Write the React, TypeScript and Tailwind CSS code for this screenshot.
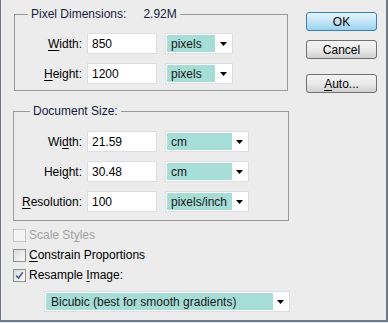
import React from "react";

const Arrow = () => (
  <svg width="7" height="4" viewBox="0 0 7 4" className="block">
    <polygon points="0,0 7,0 3.5,4" fill="#000" />
  </svg>
);

function Select({ label, w, teal }: { label: string; w: string; teal: string }) {
  return (
    <div className={`${w} h-[21px] bg-white border border-[#dadfe4] flex items-center p-[1px]`}>
      <div className={`${teal} h-full bg-[#a6ddd6] flex items-center pl-[4px] text-[#1a1a1a]`}>{label}</div>
      <div className="flex-1 flex justify-center items-center">
        <Arrow />
      </div>
    </div>
  );
}

function Row({ label, value, unit, selW, tealW }: { label: React.ReactNode; value: string; unit: string; selW: string; tealW: string }) {
  return (
    <div className="flex items-center h-[21px]">
      <div className="w-[67px] text-right">{label}</div>
      <div className="ml-[5px] w-[70px] h-[21px] bg-white border border-[#dadfe4] flex items-center pl-[4px]">{value}</div>
      <div className="ml-[8px]">
        <Select label={unit} w={selW} teal={tealW} />
      </div>
    </div>
  );
}

function Check({ checked, disabled, children }: { checked?: boolean; disabled?: boolean; children: React.ReactNode }) {
  return (
    <div className="flex items-center h-[20px]">
      <div
        className={`w-[13px] h-[13px] border flex items-center justify-center ${
          disabled ? "border-[#c5c5c5] bg-[#f4f4f4]" : "border-[#8e8f8f] bg-gradient-to-br from-[#dcdcdc] to-[#fbfbfb]"
        }`}
      >
        {checked && (
          <svg width="9" height="9" viewBox="0 0 9 9">
            <path d="M1.2 4.6 L3.6 7 L7.8 1.2" stroke="#3b5c98" strokeWidth="1.5" fill="none" />
          </svg>
        )}
      </div>
      <div className={`ml-[3px] ${disabled ? "text-[#a3a3a3]" : ""}`}>{children}</div>
    </div>
  );
}

const U = ({ children }: { children: React.ReactNode }) => <span className="underline underline-offset-2">{children}</span>;

export default function App() {
  return (
    <div className="w-[388px] h-[323px] bg-[#dbe6f3]">
      <div className="w-[388px] h-[322px] bg-[#ececec] border-l border-r-2 border-b-2 border-[#6f7a86] flex text-[12px] leading-[14px] text-black font-['Liberation_Sans',Arial,sans-serif]">
        <div className="w-[290px] pl-[12px]">
          <fieldset className="ml-[1px] mt-[7px] w-[274px] border border-[#9a9a9a] pt-[12px] pb-[6px]">
            <legend className="ml-[13px] px-[3px] text-[#151c40]">
              Pixel Dimensions:<span className="ml-[17px]">2.92M</span>
            </legend>
            <div className="flex flex-col gap-[9px]">
              <Row label={<><U>W</U>idth:</>} value="850" unit="pixels" selW="w-[68px]" tealW="w-[48px]" />
              <Row label={<><U>H</U>eight:</>} value="1200" unit="pixels" selW="w-[68px]" tealW="w-[48px]" />
            </div>
          </fieldset>
          <fieldset className="mt-[13px] w-[276px] border border-[#9a9a9a] pt-[13px] pb-[8px]">
            <legend className="ml-[16px] px-[3px] text-[#151c40]">Document Size:</legend>
            <div className="flex flex-col gap-[9px] ml-[1px]">
              <Row label={<>Wi<U>d</U>th:</>} value="21.59" unit="cm" selW="w-[84px]" tealW="w-[65px]" />
              <Row label={<>Hei<U>g</U>ht:</>} value="30.48" unit="cm" selW="w-[84px]" tealW="w-[65px]" />
              <Row label={<><U>R</U>esolution:</>} value="100" unit="pixels/inch" selW="w-[84px]" tealW="w-[65px]" />
            </div>
          </fieldset>
          <div className="mt-[4px] flex flex-col">
            <Check disabled>Scale St<U>y</U>les</Check>
            <Check><U>C</U>onstrain Proportions</Check>
            <Check checked>Resample <U>I</U>mage:</Check>
          </div>
          <div className="mt-[6px] ml-[31px] w-[246px] h-[21px] bg-white border border-[#dadfe4] flex items-center p-[1px]">
            <div className="w-[227px] h-full bg-[#a6ddd6] flex items-center pl-[5px] text-[#1a1a1a]">Bicubic (best for smooth gradients)</div>
            <div className="flex-1 flex justify-center items-center">
              <Arrow />
            </div>
          </div>
        </div>
        <div className="pl-[15px] flex flex-col">
          <button className="mt-[12px] w-[71px] h-[19px] rounded-[3px] border border-[#3c7fb1] bg-gradient-to-b from-[#e5f4fc] via-[#c4e5f6] to-[#98d1ef] flex items-center justify-center leading-none">
            OK
          </button>
          <button className="mt-[9px] w-[71px] h-[19px] rounded-[3px] border border-[#707070] bg-gradient-to-b from-[#f2f2f2] via-[#ebebeb] to-[#cfcfcf] flex items-center justify-center leading-none">
            Cancel
          </button>
          <button className="mt-[15px] w-[71px] h-[19px] rounded-[3px] border border-[#707070] bg-gradient-to-b from-[#f2f2f2] via-[#ebebeb] to-[#cfcfcf] flex items-center justify-center leading-none">
            <span><U>A</U>uto...</span>
          </button>
        </div>
      </div>
    </div>
  );
}
